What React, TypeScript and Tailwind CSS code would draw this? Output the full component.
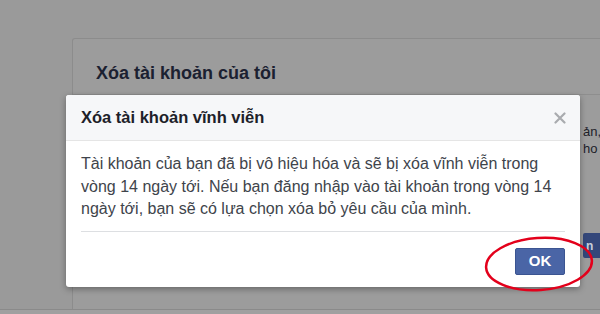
export default function App() {
  return (
    <div
      className="relative h-[314px] w-[600px] overflow-hidden bg-[#9a9a9a]"
      style={{ fontFamily: '"Liberation Sans", Arial, sans-serif' }}
    >
      {/* Page behind the overlay */}
      <div className="flex h-[309px] flex-col pt-[38px] pl-[72px]">
        <div className="w-[580px] flex-1 rounded-t-[3px] border border-b-0 border-[#8c8c8c] bg-[#9c9c9c]">
          <div className="h-[56px] border-b border-[#8e8e8e] pl-[23px] pt-[22px]">
            <h2 className="text-[18px] font-bold leading-[24px] text-[#1b2131]">Xóa tài khoản của tôi</h2>
          </div>
          <div className="flex">
            <div className="w-[510px] shrink-0" />
            <div className="flex flex-col pt-[28px]">
              <p className="whitespace-nowrap text-[13px] leading-[17px] text-[#1d2129]">ản,</p>
              <p className="whitespace-nowrap text-[13px] leading-[17px] text-[#1d2129]">ho</p>
              <button className="mt-[76px] h-[25px] w-[20px] whitespace-nowrap rounded-l-[2px] bg-[#34477a] pl-[3px] text-left text-[12px] font-bold text-[#c9cfdc]">
                n
              </button>
            </div>
          </div>
        </div>
      </div>
      <div className="h-[5px] border-t border-[#8a8a8a] bg-[#a0a0a0]" />

      {/* Dialog */}
      <div className="absolute left-[66px] top-[95px] flex h-[192px] w-[514px] flex-col rounded-[3px] bg-white shadow-[0_2px_6px_rgba(0,0,0,0.35)]">
        <div className="flex h-[46px] items-center justify-between rounded-t-[3px] border-b border-[#e5e5e5] bg-[#f6f7f9] pl-[15px] pr-[14px]">
          <h3 className="text-[16.5px] font-bold text-[#1d2129]">Xóa tài khoản vĩnh viễn</h3>
          <svg width="12" height="12" viewBox="0 0 12 12" className="text-[#a9abaf]">
            <path d="M1.5 1.5l9 9M10.5 1.5l-9 9" stroke="currentColor" strokeWidth="2.2" strokeLinecap="round" />
          </svg>
        </div>
        <div className="px-[15px]">
          <p className="border-b border-[#dddfe2] pt-[12px] pb-[10px] text-[16px] leading-[22.5px] text-[#40444b]">
            Tài khoản của bạn đã bị vô hiệu hóa và sẽ bị xóa vĩnh viễn trong vòng 14 ngày tới. Nếu bạn đăng nhập vào
            tài khoản trong vòng 14 ngày tới, bạn sẽ có lựa chọn xóa bỏ yêu cầu của mình.
          </p>
          <div className="flex justify-end pt-[16px]">
            <button className="h-[27px] w-[50px] rounded-[2px] border border-[#3b5491] bg-[#4a65a6] text-[15px] font-bold text-white">
              OK
            </button>
          </div>
        </div>
      </div>

      {/* Red annotation circle */}
      <svg className="pointer-events-none absolute left-[482px] top-[233px]" width="118" height="62" viewBox="0 0 118 62">
        <ellipse cx="57" cy="31" rx="53" ry="26" fill="none" stroke="#e3001b" strokeWidth="2.5" transform="rotate(-4 57 31)" />
      </svg>
    </div>
  )
}
